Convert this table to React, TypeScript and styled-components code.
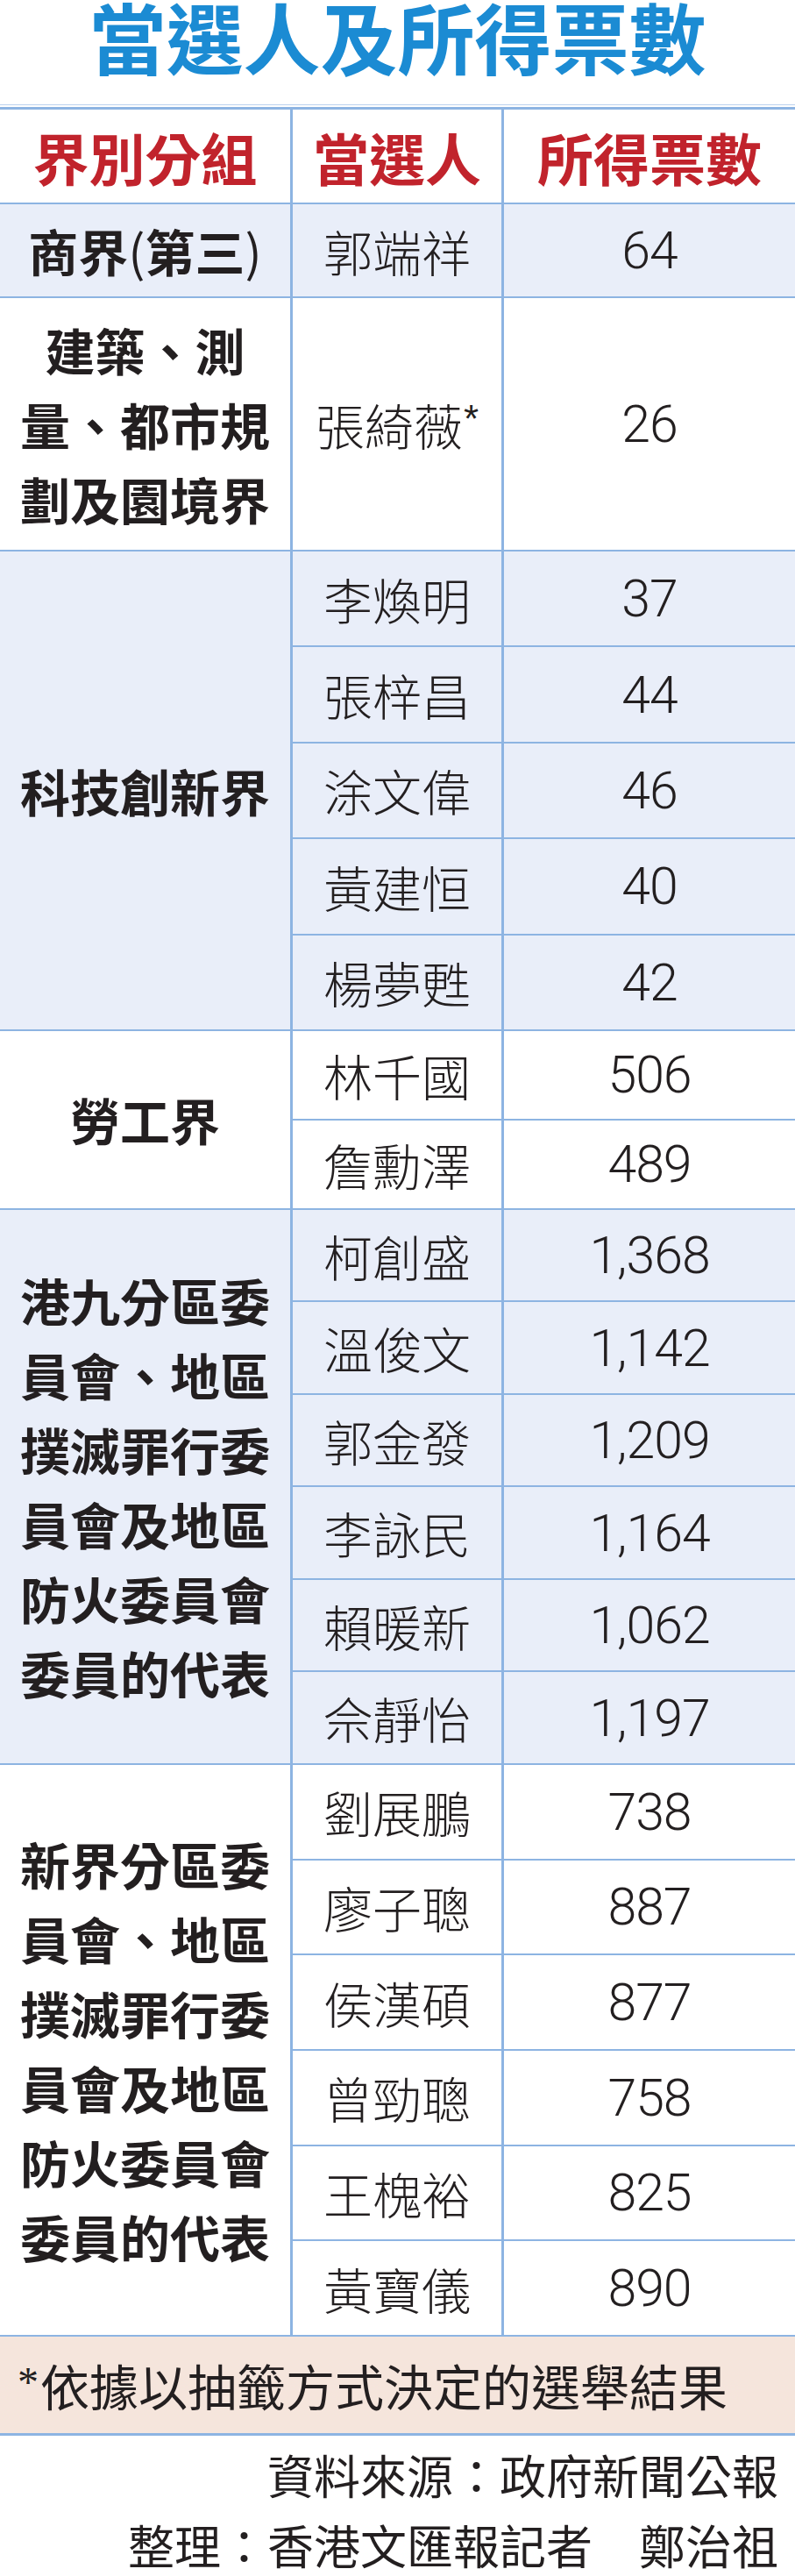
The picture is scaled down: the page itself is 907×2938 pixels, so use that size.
import React from "react";
import styled, { createGlobalStyle } from "styled-components";

const LINE = "#8db4e2";
const BLUE_BG = "#e9eef9";
const INK = "#231f20";
const CJK = `"Noto Sans CJK TC", "Noto Sans CJK SC", "Noto Sans", sans-serif`;

const GlobalStyle = createGlobalStyle`
  html, body { margin: 0; padding: 0; background: #ffffff; }
  body { font-family: ${CJK}; color: ${INK}; }
  * { box-sizing: border-box; }
`;

const Page = styled.div`
  width: 907px;
  height: 2938px;
  overflow: hidden;
  display: flex;
  flex-direction: column;
`;

const Title = styled.h1`
  margin: 0 0 39px;
  height: 80px;
  line-height: 80px;
  text-align: center;
  font-size: 88px;
  font-weight: 700;
  color: #1b8bd3;
`;

const Frame = styled.div`
  border-top: 1px solid #bcd2ee;
  padding-top: 2px;
  display: flex;
  flex-direction: column;
`;

const Group = styled.div<{ $bg?: string; $top?: boolean }>`
  display: flex;
  background: ${(p) => p.$bg || "#ffffff"};
  border-top: ${(p) => (p.$top ? `3px solid ${LINE}` : "none")};
  border-bottom: 2px solid ${LINE};
`;

const CategoryCell = styled.div`
  flex: 0 0 334px;
  border-right: 3px solid ${LINE};
  display: flex;
  align-items: center;
  justify-content: center;
  text-align: center;
  font-size: 57px;
  line-height: 85px;
  font-weight: 700;
  color: ${INK};
`;

const Paren = styled.span`
  font-weight: 400;
`;

const Entries = styled.div`
  flex: 1;
  display: flex;
  flex-direction: column;
`;

const Entry = styled.div<{ $h: number }>`
  box-sizing: content-box;
  display: flex;
  height: ${(p) => p.$h}px;
  & + & {
    border-top: 2px solid ${LINE};
  }
`;

const NameCell = styled.div`
  flex: 0 0 241px;
  border-right: 3px solid ${LINE};
  display: flex;
  align-items: center;
  justify-content: center;
  font-size: 56px;
  font-weight: 300;
  color: ${INK};
  white-space: nowrap;
`;

const NameLabel = styled.span`
  display: inline-flex;
  align-items: flex-start;
  line-height: 1;
`;

const Star = styled.span`
  font-family: "Liberation Sans", Arial, sans-serif;
  font-weight: 400;
  font-size: 44px;
  line-height: 1;
  margin-left: 1px;
`;

const VoteCell = styled.div`
  flex: 1;
  display: flex;
  align-items: center;
  justify-content: center;
  font-family: Roboto, "Liberation Sans", sans-serif;
  font-weight: 300;
  font-size: 59px;
  letter-spacing: -1px;
  color: ${INK};
`;

const HeadCategory = styled(CategoryCell)`
  height: 106px;
  font-size: 64px;
  color: #c1232c;
`;

const HeadName = styled(NameCell)`
  font-size: 64px;
  font-weight: 700;
  color: #c1232c;
`;

const HeadVote = styled(VoteCell)`
  font-family: ${CJK};
  font-size: 64px;
  font-weight: 700;
  letter-spacing: 0;
  color: #c1232c;
`;

const Note = styled.div`
  height: 113px;
  background: #f5e5dc;
  border-bottom: 3px solid ${LINE};
  padding-left: 20px;
  display: flex;
  align-items: center;
  font-size: 56px;
  font-weight: 400;
  color: ${INK};
`;

const NoteStar = styled.span`
  font-family: "Liberation Serif", serif;
  font-size: 48px;
  align-self: flex-start;
  margin-top: 24px;
  margin-right: 2px;
`;

const Sources = styled.div`
  display: flex;
  flex-direction: column;
  align-items: flex-end;
  gap: 24px;
  padding: 16px 19px 0 0;
`;

const SourceLine = styled.div`
  font-size: 53px;
  line-height: 56px;
  font-weight: 400;
  color: ${INK};
  white-space: pre;
`;

type Person = { name: string; votes: string; star?: boolean };
type Sector = { lines: string[]; rowH: number; bg?: string; people: Person[] };

const sectors: Sector[] = [
  {
    lines: ["商界(第三)"],
    rowH: 105,
    bg: BLUE_BG,
    people: [{ name: "郭端祥", votes: "64" }],
  },
  {
    lines: ["建築、測", "量、都市規", "劃及園境界"],
    rowH: 287,
    people: [{ name: "張綺薇", votes: "26", star: true }],
  },
  {
    lines: ["科技創新界"],
    rowH: 107.4,
    bg: BLUE_BG,
    people: [
      { name: "李煥明", votes: "37" },
      { name: "張梓昌", votes: "44" },
      { name: "涂文偉", votes: "46" },
      { name: "黃建恒", votes: "40" },
      { name: "楊夢甦", votes: "42" },
    ],
  },
  {
    lines: ["勞工界"],
    rowH: 100,
    people: [
      { name: "林千國", votes: "506" },
      { name: "詹勳澤", votes: "489" },
    ],
  },
  {
    lines: ["港九分區委", "員會、地區", "撲滅罪行委", "員會及地區", "防火委員會", "委員的代表"],
    rowH: 103.5,
    bg: BLUE_BG,
    people: [
      { name: "柯創盛", votes: "1,368" },
      { name: "溫俊文", votes: "1,142" },
      { name: "郭金發", votes: "1,209" },
      { name: "李詠民", votes: "1,164" },
      { name: "賴暖新", votes: "1,062" },
      { name: "佘靜怡", votes: "1,197" },
    ],
  },
  {
    lines: ["新界分區委", "員會、地區", "撲滅罪行委", "員會及地區", "防火委員會", "委員的代表"],
    rowH: 106.67,
    people: [
      { name: "劉展鵬", votes: "738" },
      { name: "廖子聰", votes: "887" },
      { name: "侯漢碩", votes: "877" },
      { name: "曾勁聰", votes: "758" },
      { name: "王槐裕", votes: "825" },
      { name: "黃寶儀", votes: "890" },
    ],
  },
];

function renderLine(line: string) {
  return line.split(/([()])/).map((part, i) =>
    part === "(" || part === ")" ? <Paren key={i}>{part}</Paren> : <React.Fragment key={i}>{part}</React.Fragment>
  );
}

export default function App() {
  return (
    <Page>
      <GlobalStyle />
      <Title>當選人及所得票數</Title>
      <Frame>
        <Group $top>
          <HeadCategory>界別分組</HeadCategory>
          <Entries>
            <Entry $h={106}>
              <HeadName>當選人</HeadName>
              <HeadVote>所得票數</HeadVote>
            </Entry>
          </Entries>
        </Group>
        {sectors.map((s) => (
          <Group key={s.lines.join("")} $bg={s.bg}>
            <CategoryCell>
              <div>
                {s.lines.map((l, i) => (
                  <div key={i}>{renderLine(l)}</div>
                ))}
              </div>
            </CategoryCell>
            <Entries>
              {s.people.map((p) => (
                <Entry key={p.name} $h={s.rowH}>
                  <NameCell>
                    <NameLabel>
                      {p.name}
                      {p.star && <Star>*</Star>}
                    </NameLabel>
                  </NameCell>
                  <VoteCell>{p.votes}</VoteCell>
                </Entry>
              ))}
            </Entries>
          </Group>
        ))}
        <Note>
          <NoteStar>*</NoteStar>依據以抽籤方式決定的選舉結果
        </Note>
      </Frame>
      <Sources>
        <SourceLine>資料來源：政府新聞公報</SourceLine>
        <SourceLine>整理：香港文匯報記者　鄭治祖</SourceLine>
      </Sources>
    </Page>
  );
}
